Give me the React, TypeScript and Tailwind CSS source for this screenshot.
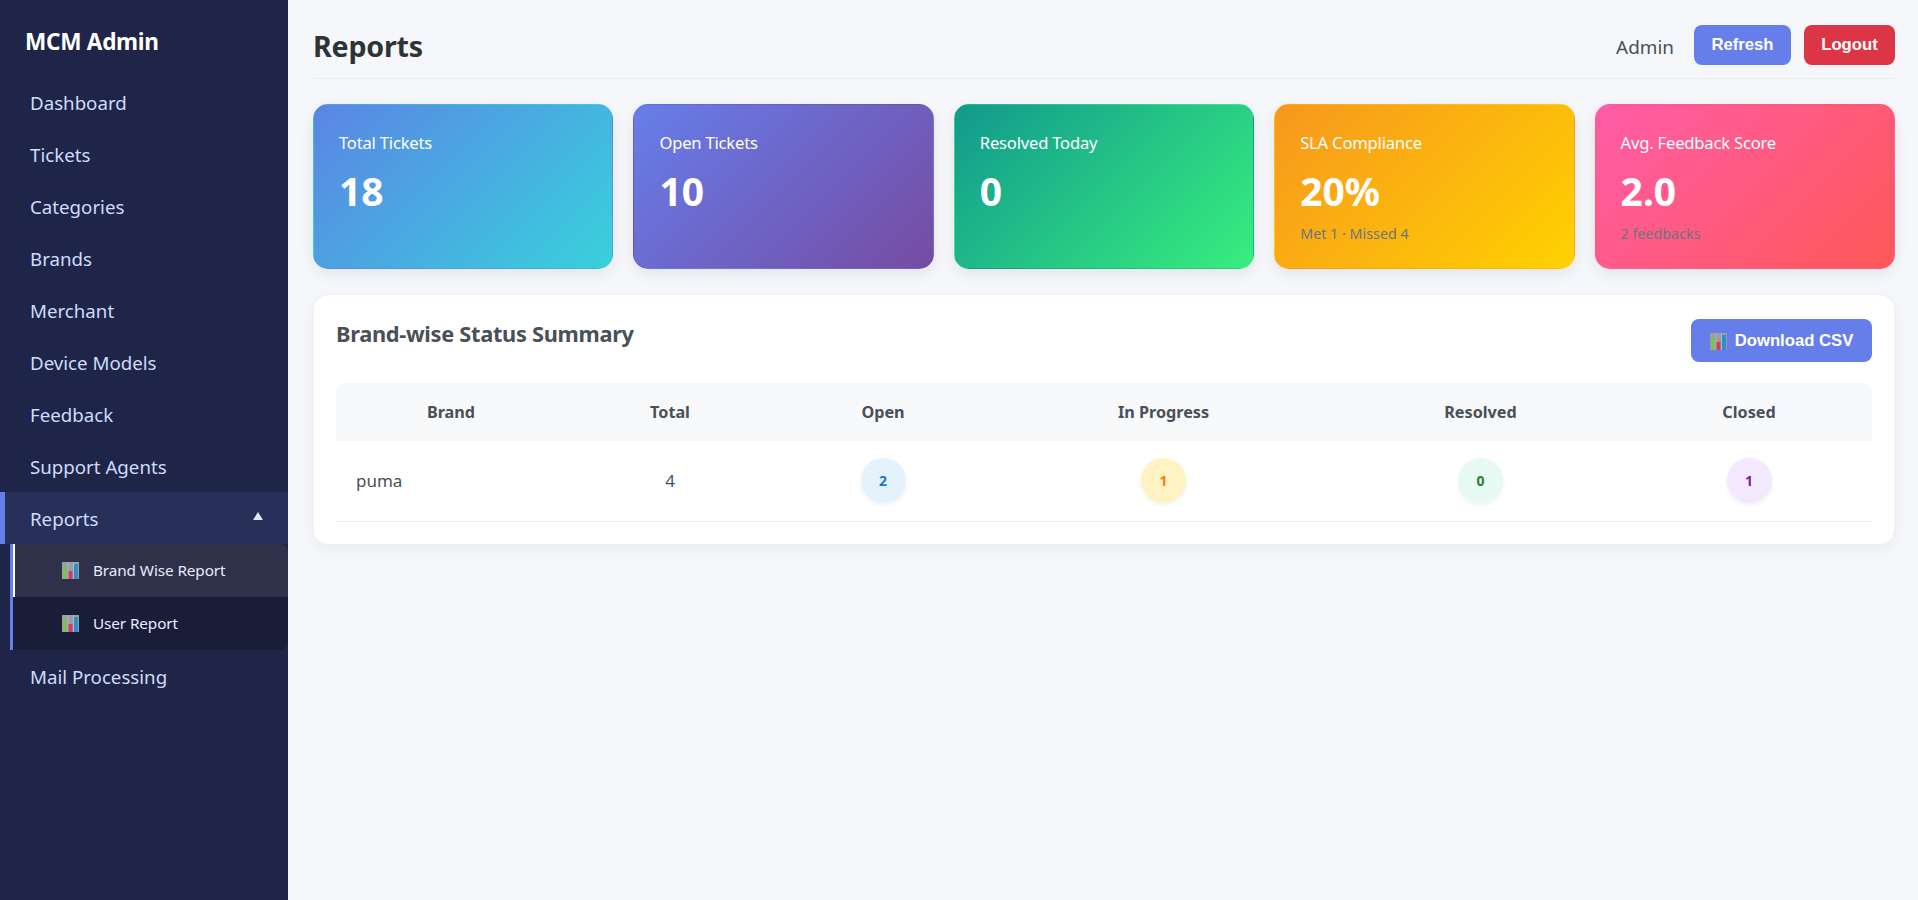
const navTop = ["Dashboard", "Tickets", "Categories", "Brands", "Merchant", "Device Models", "Feedback", "Support Agents"];

function ChartIcon({ size = 17 }: { size?: number }) {
  return (
    <svg width={size} height={size} viewBox="0 0 17 17" className="shrink-0">
      <rect x="0" y="0" width="17" height="17" fill="#9a9ca6" />
      <rect x="5.5" y="0" width="1" height="17" fill="#b4b6bd" />
      <rect x="11" y="0" width="1" height="17" fill="#b4b6bd" />
      <rect x="1" y="4" width="4" height="13" fill="#7fbf5a" />
      <rect x="6.5" y="9" width="4" height="8" fill="#d23a6c" />
      <rect x="12" y="2" width="4" height="15" fill="#2f8fc9" />
    </svg>
  );
}

function StatCard({ title, value, sub, gradient }: { title: string; value: string; sub?: string; gradient: string }) {
  return (
    <div className={`h-[165px] rounded-[15px] border border-transparent px-[25px] pt-[25px] text-white shadow-[0_5px_15px_rgba(0,0,0,0.08)] ${gradient}`}>
      <div className="mt-[1px] text-[16.6px] leading-[24px] tracking-[-0.2px]">{title}</div>
      <div className="mt-[9px] text-[39px] leading-[54px] font-bold">{value}</div>
      {sub && <div className="mt-[7px] text-[14.3px] leading-[18px] text-[#6c757d]">{sub}</div>}
    </div>
  );
}

function Badge({ value, className }: { value: number; className: string }) {
  return (
    <span className={`inline-flex h-[45px] w-[45px] items-center justify-center rounded-full text-[14px] font-bold shadow-[0_2px_5px_rgba(0,0,0,0.06)] ${className}`}>
      {value}
    </span>
  );
}

export default function App() {
  return (
    <div className="flex min-h-[900px] bg-[#f5f7fb] font-['Noto_Sans',sans-serif]">
      <aside className="w-[288px] shrink-0 bg-[#1e2548] text-[#cfdcfb]">
        <div className="px-[25px] pt-[27px] pb-[15px] text-[22.6px] leading-[30px] font-bold tracking-[-0.3px] text-white">MCM Admin</div>
        <nav className="mt-[4px]">
          {navTop.map((item) => (
            <div key={item} className="flex h-[52px] items-center pt-[2px] pl-[30px] text-[18.7px]">
              {item}
            </div>
          ))}
          <div className="flex h-[52px] items-center justify-between border-l-[5px] border-[#667eea] bg-[#282f59] pt-[2px] pr-[25px] pl-[25px] text-[18.7px]">
            <span>Reports</span>
            <span className="mb-[6px] h-0 w-0 border-x-[5px] border-b-[8px] border-x-transparent border-b-[#e2e8ff]" />
          </div>
          <div className="ml-[10px] overflow-hidden rounded-r-[8px] border-l-[3px] border-[#667eea] bg-[#191d38] text-[15.3px] tracking-[-0.1px] text-[#e6ecff]">
            <div className="flex h-[53px] items-center gap-[14px] border-l-[2px] border-white bg-[#2e3149] pl-[47px]">
              <ChartIcon />
              <span>Brand Wise Report</span>
            </div>
            <div className="flex h-[53px] items-center gap-[14px] pl-[49px]">
              <ChartIcon />
              <span>User Report</span>
            </div>
          </div>
          <div className="flex h-[52px] items-center pt-[2px] pl-[30px] text-[18.7px]">Mail Processing</div>
        </nav>
      </aside>

      <main className="flex-1 pt-[25px] pr-[23px] pl-[25px]">
        <header className="flex h-[54px] items-start justify-between border-b border-[#e9ecef]">
          <h1 className="pt-[1px] text-[28.6px] leading-[40px] font-bold tracking-[-0.2px] text-[#2d3436]">Reports</h1>
          <div className="flex items-center gap-[13px]">
            <span className="mt-[4px] mr-[7px] text-[18.9px] text-[#495057]">Admin</span>
            <button className="h-[40px] w-[97px] rounded-[8px] bg-[#667eea] font-['Liberation_Sans',sans-serif] text-[16.7px] font-bold text-white">Refresh</button>
            <button className="h-[40px] w-[91px] rounded-[8px] bg-[#dc3545] font-['Liberation_Sans',sans-serif] text-[16.7px] font-bold text-white">Logout</button>
          </div>
        </header>

        <section className="mt-[25px] grid grid-cols-5 gap-[20px]">
          <StatCard title="Total Tickets" value="18" gradient="bg-[linear-gradient(135deg,#5a85e5,#38d1dc)]" />
          <StatCard title="Open Tickets" value="10" gradient="bg-[linear-gradient(135deg,#667eea,#764ba2)]" />
          <StatCard title="Resolved Today" value="0" gradient="bg-[linear-gradient(135deg,#11998e,#38ef7d)]" />
          <StatCard title="SLA Compliance" value="20%" sub="Met 1 · Missed 4" gradient="bg-[linear-gradient(135deg,#f7971e,#ffd200)]" />
          <StatCard title="Avg. Feedback Score" value="2.0" sub="2 feedbacks" gradient="bg-[linear-gradient(135deg,#ff5ca8,#ff5858)]" />
        </section>

        <section className="mt-[25px] rounded-[15px] border border-[#eef0f4] bg-white px-[22px] pt-[24px] pb-[22px] shadow-[0_5px_15px_rgba(0,0,0,0.05)]">
          <div className="flex h-[64px] items-start justify-between">
            <h2 className="-mt-[1px] text-[21.8px] leading-[32px] font-bold tracking-[-0.3px] text-[#495057]">Brand-wise Status Summary</h2>
            <button className="flex h-[43px] w-[181px] items-center justify-center gap-[8px] rounded-[8px] bg-[#667eea] pt-[1px] font-['Liberation_Sans',sans-serif] text-[16.7px] font-bold text-white">
              <ChartIcon />
              Download CSV
            </button>
          </div>
          <table className="w-full table-fixed border-collapse">
            <thead>
              <tr className="h-[58px] bg-[#f8f9fa] text-[16.2px] font-bold text-[#495057]">
                <th className="w-[230px] rounded-tl-[10px] pt-[1px] font-bold">Brand</th>
                <th className="w-[208px] pt-[1px] font-bold">Total</th>
                <th className="w-[218px] pt-[1px] font-bold">Open</th>
                <th className="w-[343px] pt-[1px] font-bold">In Progress</th>
                <th className="w-[291px] pt-[1px] font-bold">Resolved</th>
                <th className="rounded-tr-[10px] pt-[1px] font-bold">Closed</th>
              </tr>
            </thead>
            <tbody>
              <tr className="h-[80px] border-b border-[#e9ecef] text-center text-[17px] text-[#495057]">
                <td className="pl-[20px] text-left">puma</td>
                <td>4</td>
                <td><Badge value={2} className="bg-[#e3f2fd] text-[#1976d2]" /></td>
                <td><Badge value={1} className="bg-[#fff3c4] text-[#f57c00]" /></td>
                <td><Badge value={0} className="bg-[#e6faf3] text-[#2e7d32]" /></td>
                <td><Badge value={1} className="bg-[#f3e8fd] text-[#7b1fa2]" /></td>
              </tr>
            </tbody>
          </table>
        </section>
      </main>
    </div>
  );
}
